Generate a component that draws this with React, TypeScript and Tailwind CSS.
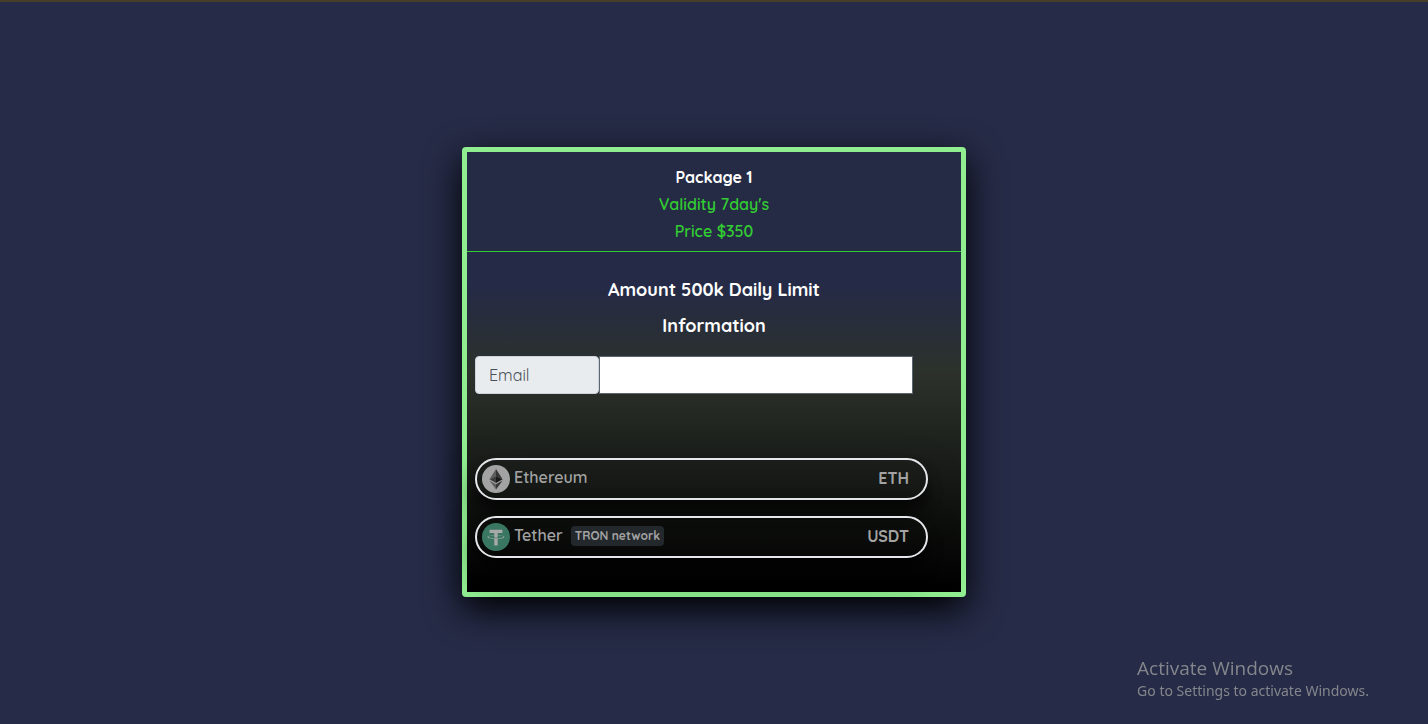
import type { ReactNode } from 'react';

type Coin = {
  name: string;
  symbol: string;
  network?: string;
  icon: ReactNode;
};

const EthereumIcon = () => (
  <svg viewBox="0 0 32 32" className="h-7 w-7 shrink-0" aria-hidden="true">
    <circle cx="16" cy="16" r="16" fill="#a3a3a3" />
    <path d="M16 4.5 8.5 16.2l7.5-3.4z" fill="#5c5c5c" />
    <path d="M16 4.5v8.3l7.5 3.4z" fill="#353535" />
    <path d="M8.5 16.2 16 12.8v7.8z" fill="#3c3c3c" />
    <path d="M23.5 16.2 16 12.8v7.8z" fill="#191919" />
    <path d="m8.5 17.7 7.5 4.3v6z" fill="#606060" />
    <path d="m23.5 17.7-7.5 4.3v6z" fill="#353535" />
  </svg>
);

const TetherIcon = () => (
  <svg viewBox="0 0 32 32" className="h-7 w-7 shrink-0" aria-hidden="true">
    <circle cx="16" cy="16" r="16" fill="#397763" />
    <path
      fill="#a8a8a8"
      d="M17.922 17.383v-.002c-.11.008-.677.042-1.942.042-1.01 0-1.721-.03-1.971-.042v.003c-3.888-.171-6.79-.848-6.79-1.658 0-.809 2.902-1.486 6.79-1.66v2.644c.254.018.982.061 1.988.061 1.207 0 1.812-.05 1.925-.06v-2.643c3.88.173 6.775.85 6.775 1.658 0 .81-2.895 1.485-6.775 1.657m0-3.59v-2.366h5.414V7.819H8.595v3.608h5.414v2.365c-4.4.202-7.709 1.074-7.709 2.118 0 1.044 3.309 1.915 7.709 2.118v7.582h3.913v-7.584c4.393-.202 7.694-1.073 7.694-2.116 0-1.043-3.301-1.914-7.694-2.117"
    />
  </svg>
);

const coins: Coin[] = [
  { name: 'Ethereum', symbol: 'ETH', icon: <EthereumIcon /> },
  { name: 'Tether', symbol: 'USDT', network: 'TRON network', icon: <TetherIcon /> },
];

const CoinButton = ({ coin }: { coin: Coin }) => (
  <button
    type="button"
    className="flex h-[42px] w-full items-center rounded-full border-2 border-gray-200 pr-[17px] pb-0.5 pl-[5px] font-bold text-[#a3a3a3] shadow-[0_16px_38px_rgba(0,0,0,0.4),0_12px_14px_rgba(0,0,0,0.5)]"
  >
    <span className="pt-0.5">{coin.icon}</span>
    <span className="ml-1 pb-0.5 font-semibold">{coin.name}</span>
    {coin.network && (
      <span className="ml-2 rounded bg-[#23282c] px-1 text-xs leading-5">{coin.network}</span>
    )}
    <span className="ml-auto">{coin.symbol}</span>
  </button>
);

export default function App() {
  return (
    <div className="flex min-h-screen flex-col items-center justify-center border-t-2 border-[#483d27] bg-[#262b47] pt-[18px] font-['Quicksand','Lato',sans-serif] text-base">
      <main className="w-full max-w-[504px] rounded border-[5px] border-[#90ee90] bg-[linear-gradient(#252a47_30%,#2c322b_50%,#000)] shadow-[0_12px_36px_black]">
        <header className="border-b border-[#32cd32] bg-[#262b45] pt-3 pb-1.5 text-center font-semibold leading-[27px] text-[#32cd32]">
          <h1 className="font-bold text-white">Package 1</h1>
          <p>Validity 7day's</p>
          <p>Price $350</p>
        </header>

        <form className="px-2 pt-5 pb-[34px]">
          <div className="text-center text-lg font-bold leading-9 text-white">
            <h2>Amount 500k Daily Limit</h2>
            <h2>Information</h2>
          </div>

          <div className="mt-3 mr-10 flex h-[38px]">
            <label
              htmlFor="email"
              className="flex w-[124px] items-center rounded border border-[#ced4da] bg-[#e9ecef] px-[13px] text-[#495057]"
            >
              Email
            </label>
            <input
              id="email"
              type="email"
              className="min-w-0 flex-1 border border-[#5c6670] bg-white px-3 text-gray-700 outline-none"
            />
          </div>

          <div className="mt-16 mr-[25px] space-y-4">
            {coins.map((coin) => (
              <CoinButton key={coin.symbol} coin={coin} />
            ))}
          </div>
        </form>
      </main>

      {/* System notice pinned over the page */}
      <aside className="fixed right-[59px] bottom-[23px] text-[#85868c]">
        <p className="mb-px font-['Open_Sans',sans-serif] text-[19px] leading-6">Activate Windows</p>
        <p className="font-['Noto_Sans',sans-serif] text-sm leading-5">
          Go to Settings to activate Windows.
        </p>
      </aside>
    </div>
  );
}
